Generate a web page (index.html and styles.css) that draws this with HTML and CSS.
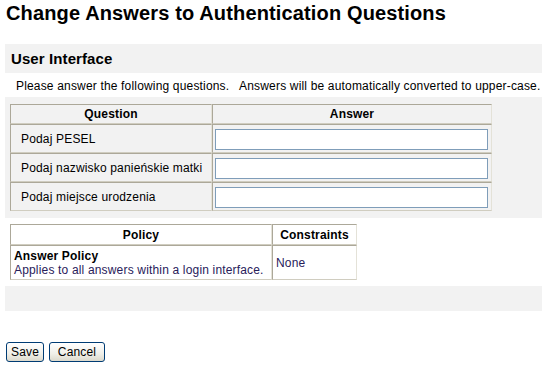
FILE: index.html
```html
<!DOCTYPE html>
<html lang="en">
<head>
  <meta charset="UTF-8" />
  <title>Change Answers to Authentication Questions</title>
  <link rel="stylesheet" href="styles.css">
</head>
<body>

  <h1 class="page-title">Change Answers to Authentication Questions</h1>

  <div class="section-head">User Interface</div>
  <p class="hint">Please answer the following questions.&nbsp;&nbsp; Answers will be automatically converted to upper-case.</p>

  <div class="panel">
    <table class="grid qa">
      <thead>
        <tr><th class="col-q">Question</th><th class="col-a">Answer</th></tr>
      </thead>
      <tbody>
        <tr><td class="label">Podaj PESEL</td><td class="field"><input type="text"></td></tr>
        <tr><td class="label">Podaj nazwisko panieńskie matki</td><td class="field"><input type="text"></td></tr>
        <tr><td class="label">Podaj miejsce urodzenia</td><td class="field"><input type="text"></td></tr>
      </tbody>
    </table>
  </div>

  <table class="grid policy">
    <thead>
      <tr><th class="col-p">Policy</th><th class="col-c">Constraints</th></tr>
    </thead>
    <tbody>
      <tr>
        <td class="desc"><b>Answer Policy</b><br>Applies to all answers within a login interface.</td>
        <td class="value">None</td>
      </tr>
    </tbody>
  </table>

  <div class="panel panel-empty"></div>

  <div class="actions">
    <button type="button" class="btn-save">Save</button>
    <button type="button" class="btn-cancel">Cancel</button>
  </div>

</body>
</html>
```

FILE: styles.css
```css
body {
  margin: 0;
  padding: 0 0 0 5px;
  font-family: 'Liberation Sans', Arial, sans-serif;
  font-size: 12px;
  letter-spacing: 0.17px;
  color: #000;
  background: #fff;
}

.page-title {
  margin: 0;
  padding: 2px 0 0 1px;
  font-size: 20px;
  line-height: 23px;
  font-weight: bold;
  letter-spacing: 0.14px;
}

.section-head {
  margin-top: 19px;
  padding-left: 6px;
  background: #f2f2f2;
  font-size: 15px;
  font-weight: bold;
  line-height: 29px;
  letter-spacing: 0.1px;
}

.hint {
  margin: 0;
  padding: 2px 0 0 11px;
  line-height: 22px;
  white-space: nowrap;
}

.panel {
  background: #f2f2f2;
  padding: 7px 0 7px 5px;
}

.panel-empty {
  height: 25px;
  padding: 0;
}

.grid {
  border-collapse: separate;
  border-spacing: 0;
  font-size: 12px;
}

.grid th, .grid td {
  border: 1px solid;
  border-color: #aca899 #e4e2d8 #d0cdc0 #aca899;
  padding: 0;
}

.grid th {
  font-weight: bold;
  text-align: center;
}

.qa {
  width: 482px;
}

.qa th {
  height: 20px;
  box-sizing: border-box;
  background: #f2f2f2;
}

.qa .col-q {
  width: 202px;
}

.qa td {
  height: 29px;
  box-sizing: border-box;
  background: #f2f2f2;
  vertical-align: middle;
}

.qa .label {
  padding-left: 10px;
}

.qa .field {
  padding: 0 2px;
}

.qa input {
  display: block;
  width: 273px;
  height: 21px;
  box-sizing: border-box;
  margin: 1px 0 0;
  border: 1px solid #7f9db9;
  background: #fff;
  padding: 0 2px;
  font: 12px 'Liberation Sans', Arial, sans-serif;
}

.policy {
  margin: 6px 0 6px 5px;
  width: 347px;
  background: #fff;
}

.policy th {
  height: 21px;
  box-sizing: border-box;
}

.policy .col-p {
  width: 262px;
}

.policy td {
  height: 35px;
  box-sizing: border-box;
  line-height: 14px;
  vertical-align: middle;
}

.policy .desc {
  padding-left: 3px;
  color: #28205a;
}

.policy .desc b {
  color: #000;
}

.policy .value {
  padding-left: 3px;
  color: #28205a;
}

.actions {
  display: flex;
  gap: 5px;
  margin-top: 31px;
  padding-left: 1px;
}

.actions button {
  height: 20px;
  padding: 0;
  border: 1px solid #003c74;
  border-radius: 3px;
  background: linear-gradient(#ffffff, #f0efe8 60%, #dcd9cc);
  font: 12px 'Liberation Sans', Arial, sans-serif;
  letter-spacing: 0.17px;
  color: #000;
  cursor: pointer;
}

.btn-save {
  width: 38px;
}

.btn-cancel {
  width: 56px;
}
```
